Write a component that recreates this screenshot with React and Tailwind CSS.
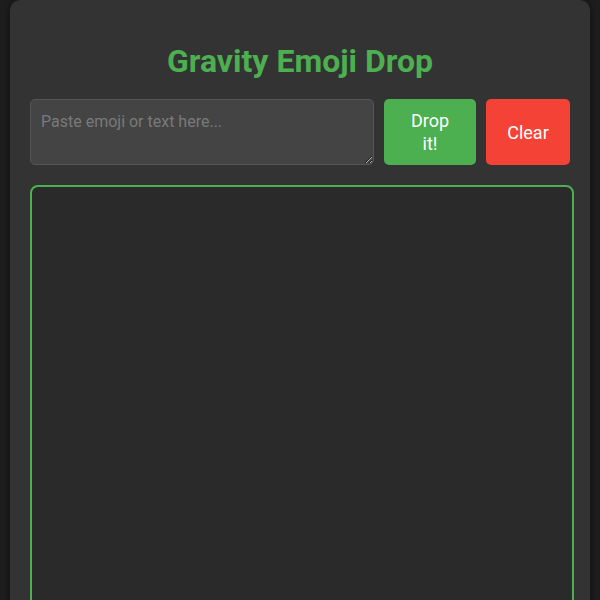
export default function App() {
  return (
    <div className="min-h-screen bg-[#1e1e1e] font-['Roboto',sans-serif] px-[10px]">
      <div className="bg-[#333333] rounded-t-[10px] px-5 pt-4 pb-10 shadow-[0_0_10px_rgba(0,0,0,0.5)]">
        <h1 className="text-[32px] leading-normal font-bold text-[#4caf50] text-center mt-[21px] mb-[14px]">
          Gravity Emoji Drop
        </h1>
        <div className="flex gap-[10px] mb-5">
          <textarea
            placeholder="Paste emoji or text here..."
            className="flex-1 h-[66px] bg-[#444444] border border-[#555555] rounded-[5px] p-[10px] text-[16px] text-white placeholder:text-[#7a7a7a] outline-none"
          />
          <button className="w-[92px] h-[66px] bg-[#4caf50] text-white text-[18px] leading-[23px] rounded-[5px] px-5">
            Drop it!
          </button>
          <button className="w-[84px] h-[66px] bg-[#f44336] text-white text-[18px] leading-[23px] rounded-[5px] px-5">
            Clear
          </button>
        </div>
        <div className="box-content w-full h-[500px] border-2 border-[#4caf50] rounded-[8px] bg-[#2a2a2a]" />
      </div>
    </div>
  );
}
